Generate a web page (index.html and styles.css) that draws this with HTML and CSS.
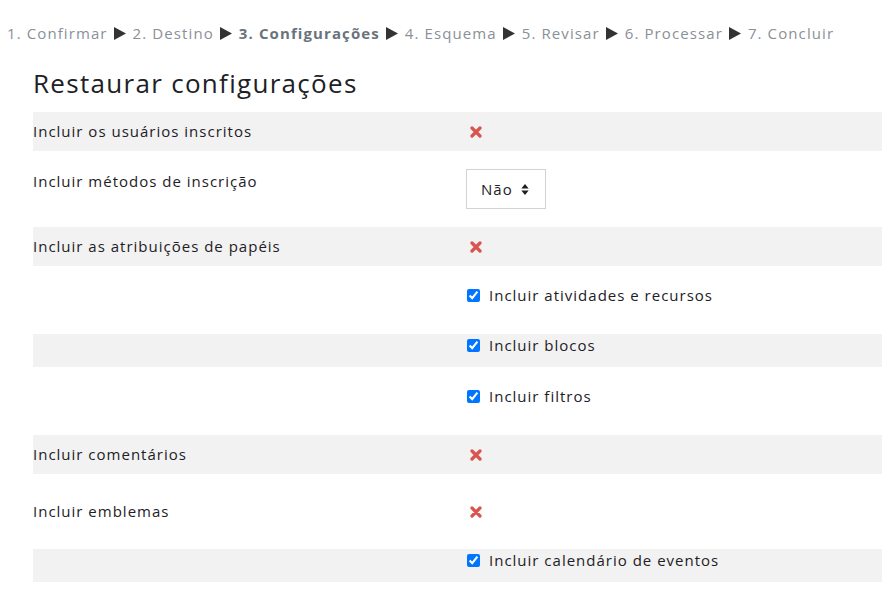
FILE: index.html
```html
<!DOCTYPE html>
<html lang="pt">
<head>
<meta charset="utf-8">
<title>Restaurar configurações</title>
<link rel="stylesheet" href="styles.css">
</head>
<body>
<nav class="steps">
  <span class="step">1. Confirmar</span><svg class="arrow" viewBox="0 0 12 13"><path d="M0 0 L12 6.5 L0 13 Z"/></svg>
  <span class="step">2. Destino</span><svg class="arrow" viewBox="0 0 12 13"><path d="M0 0 L12 6.5 L0 13 Z"/></svg>
  <span class="step current">3. Configurações</span><svg class="arrow" viewBox="0 0 12 13"><path d="M0 0 L12 6.5 L0 13 Z"/></svg>
  <span class="step">4. Esquema</span><svg class="arrow" viewBox="0 0 12 13"><path d="M0 0 L12 6.5 L0 13 Z"/></svg>
  <span class="step">5. Revisar</span><svg class="arrow" viewBox="0 0 12 13"><path d="M0 0 L12 6.5 L0 13 Z"/></svg>
  <span class="step">6. Processar</span><svg class="arrow" viewBox="0 0 12 13"><path d="M0 0 L12 6.5 L0 13 Z"/></svg>
  <span class="step">7. Concluir</span>
</nav>
<main class="content">
  <h3 class="title">Restaurar configurações</h3>
  <div class="settings">
    <div class="row gray r-a">
      <div class="label">Incluir os usuários inscritos</div>
      <div class="value"><svg class="no" viewBox="0 0 12 12"><path d="M2 2 L10 10 M10 2 L2 10"/></svg></div>
    </div>
    <div class="row r-b">
      <div class="label lab-sel">Incluir métodos de inscrição</div>
      <div class="value"><div class="select">Não <svg class="caret" viewBox="0 0 8 12"><path d="M4 0 L8 5 L0 5 Z M4 12 L8 7 L0 7 Z"/></svg></div></div>
    </div>
    <div class="row gray r-a">
      <div class="label">Incluir as atribuições de papéis</div>
      <div class="value"><svg class="no" viewBox="0 0 12 12"><path d="M2 2 L10 10 M10 2 L2 10"/></svg></div>
    </div>
    <div class="row r-c">
      <div class="label"></div>
      <label class="value check"><input type="checkbox" checked>Incluir atividades e recursos</label>
    </div>
    <div class="row gray r-d">
      <div class="label"></div>
      <label class="value check"><input type="checkbox" checked>Incluir blocos</label>
    </div>
    <div class="row r-c">
      <div class="label"></div>
      <label class="value check"><input type="checkbox" checked>Incluir filtros</label>
    </div>
    <div class="row gray r-a">
      <div class="label">Incluir comentários</div>
      <div class="value"><svg class="no" viewBox="0 0 12 12"><path d="M2 2 L10 10 M10 2 L2 10"/></svg></div>
    </div>
    <div class="row r-e">
      <div class="label">Incluir emblemas</div>
      <div class="value"><svg class="no" viewBox="0 0 12 12"><path d="M2 2 L10 10 M10 2 L2 10"/></svg></div>
    </div>
    <div class="row gray r-d">
      <div class="label"></div>
      <label class="value check"><input type="checkbox" checked>Incluir calendário de eventos</label>
    </div>
  </div>
</main>
</body>
</html>
```

FILE: styles.css
```css
* { box-sizing: border-box; }
html, body { margin: 0; padding: 0; background: #fff; }
body {
  font-family: "Open Sans", "Noto Sans", sans-serif;
  font-size: 15px;
  letter-spacing: 1px;
  color: #1d2125;
  width: 882px;
  height: 592px;
  overflow: hidden;
}
.steps {
  display: flex;
  align-items: center;
  height: 22px;
  margin: 22px 0 0 7px;
  color: #8a9098;
  font-size: 15px;
  letter-spacing: 1.1px;
  white-space: nowrap;
}
.step { line-height: 22px; }
.step.current { font-weight: 700; color: #6a737b; }
.arrow { width: 12px; height: 13px; margin: 0 7px 0 6px; fill: #333; }
.content { padding-left: 33px; }
.title {
  margin: 23px 0 0 0;
  font-size: 26px;
  font-weight: 400;
  letter-spacing: 1.3px;
  line-height: 32px;
  height: 45px;
  color: #1d2125;
}
.settings { display: flex; flex-direction: column; }
.row { display: flex; align-items: flex-start; line-height: 22px; }
.row.gray { background: #f2f2f2; }
.label { width: 433px; flex: none; }
.value { display: flex; align-items: center; min-height: 22px; }
.r-a { height: 39px; padding-top: 8px; }
.r-b { height: 76px; padding-top: 18px; }
.r-c { height: 68px; padding-top: 18px; }
.r-d { height: 33px; padding-top: 0; }
.r-e { height: 75px; padding-top: 26px; }
.lab-sel { padding-top: 1px; }
.no { width: 12px; height: 12px; margin: 1px 0 0 4px; stroke: #d9534f; stroke-width: 3.2; stroke-linecap: round; fill: none; }
.select {
  display: flex;
  align-items: center;
  width: 80px;
  height: 40px;
  padding-left: 14px;
  border: 1px solid #ced4da;
  background: #fff;
  color: #1d2125;
}
.caret { width: 8px; height: 11px; margin-left: 8px; fill: #1d2125; }
.check input { width: 13px; height: 13px; margin: 0 9px 0 1px; accent-color: #0075ff; }
```
